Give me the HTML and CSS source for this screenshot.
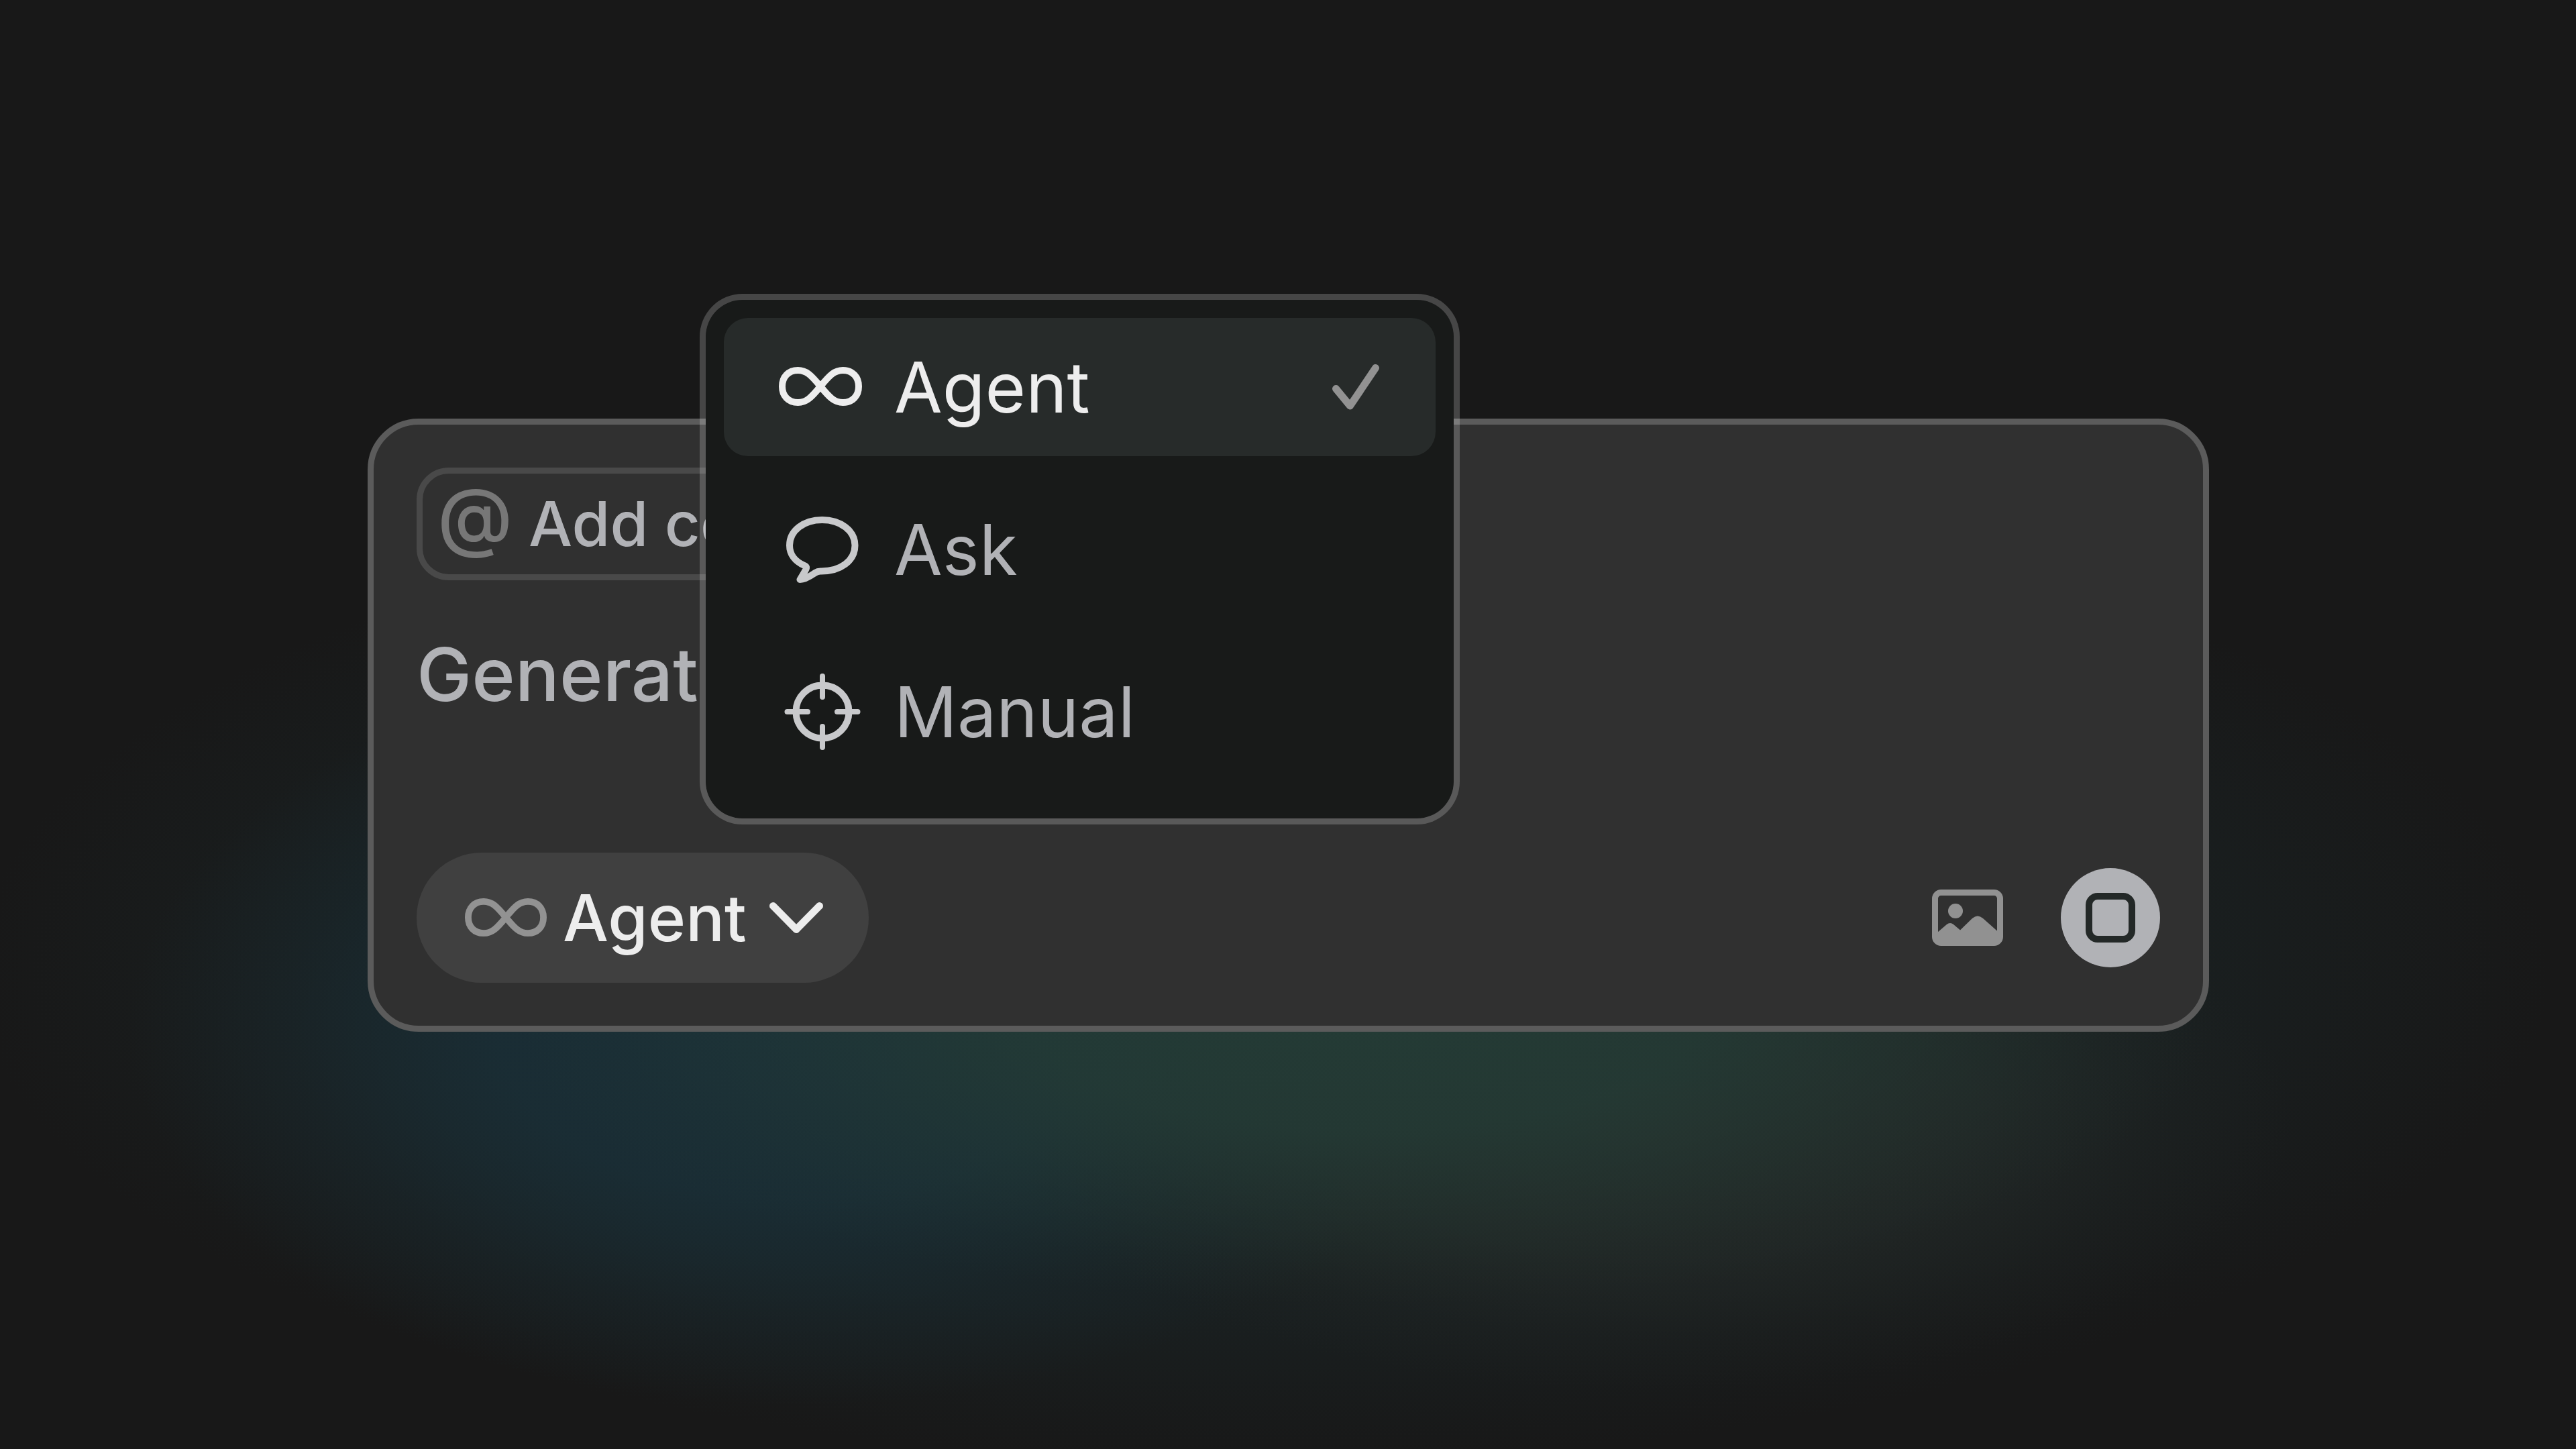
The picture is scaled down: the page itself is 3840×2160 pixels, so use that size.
FILE: index.html
```html
<!DOCTYPE html>
<html lang="en">
<head>
    <meta charset="UTF-8">
    <title>Agent</title>
    <link rel="stylesheet" href="styles.css">
</head>
<body>
    <main class="stage">
        <form class="composer">
            <button type="button" class="context-chip">
                <span class="at-sign">@</span>
                <span>Add context</span>
            </button>

            <textarea class="prompt" aria-label="Prompt">Generat</textarea>

            <div class="toolbar">
                <div class="mode-picker">
                    <button type="button" class="mode-btn" aria-haspopup="menu" aria-expanded="true">
                        <svg class="mode-icon" viewBox="0 0 124 58">
                            <path d="M62 29C48 12 41 5 28.500 5C14 5 5 15 5 29C5 43 14 53 28.500 53C41 53 48 46 62 29C76 12 83 5 95.500 5C110 5 119 15 119 29C119 43 110 53 95.500 53C83 53 76 46 62 29Z"/>
                        </svg>
                        <span>Agent</span>
                        <svg class="chevron" viewBox="0 0 80 46">
                            <path d="M5.500 5.500L40 40.500L74.500 5.500"/>
                        </svg>
                    </button>

                    <div class="menu" role="menu">
                        <button type="button" class="menu-item selected" role="menuitemradio" aria-checked="true">
                            <svg class="menu-icon" viewBox="0 0 126 114">
                                <path d="M60 56C46 39 39 32 26.500 32C12 32 3 42 3 56C3 70 12 80 26.500 80C39 80 46 73 60 56C74 39 81 32 93.500 32C108 32 117 42 117 56C117 70 108 80 93.500 80C81 80 74 73 60 56Z"/>
                            </svg>
                            <span>Agent</span>
                            <svg class="check" viewBox="0 0 70 68">
                                <path d="M5.500 36.500L26.500 62L64.500 5.500"/>
                            </svg>
                        </button>
                        <button type="button" class="menu-item" role="menuitemradio" aria-checked="false">
                            <svg class="menu-icon" viewBox="0 0 126 114">
                                <path d="M60 89.500C90 90 111.500 74 111.500 51C111.500 29 90 13 62.500 13C35 13 14 29 14 51C14 64 22 75 36 81C41 83 39 86 36 91L29.500 102C38 102 46 96 52 92C55 90 56 89.500 60 89.500Z"/>
                            </svg>
                            <span>Ask</span>
                        </button>
                        <button type="button" class="menu-item" role="menuitemradio" aria-checked="false">
                            <svg class="menu-icon" viewBox="0 0 126 114">
                                <circle cx="63" cy="57" r="39.500"/>
                                <path class="ticks" d="M63 4V35M63 79V110M10.500 57H41M85 57H115.500"/>
                            </svg>
                            <span>Manual</span>
                        </button>
                    </div>
                </div>

                <div class="actions">
                    <button type="button" class="image-btn" aria-label="Attach image">
                        <svg viewBox="0 0 106 84">
                            <rect x="4.500" y="4.500" width="97" height="75" rx="9"/>
                            <circle class="fill" cx="35" cy="32" r="11"/>
                            <path class="fill" d="M8 64L22 52Q27 48 32 52L42 60.500L60 43Q68 36 76 43L98 62.500V78H8Z"/>
                        </svg>
                    </button>
                    <button type="button" class="stop-btn" aria-label="Stop">
                        <svg viewBox="0 0 74 74">
                            <rect x="5" y="5" width="64" height="64" rx="13"/>
                        </svg>
                    </button>
                </div>
            </div>
        </form>
    </main>
</body>
</html>
```

FILE: styles.css
```css
* {
    box-sizing: border-box;
}
body {
    margin: 0;
    background-color: #181818;
    font-family: Inter, "Liberation Sans", sans-serif;
}
.stage {
    display: flex;
    align-items: center;
    min-height: 100vh;
    padding: 2px 547px 0 548px;
    /* coloured glow behind the composer */
    background-image:
        radial-gradient(ellipse 33% 20% at 53% 70%, rgba(36, 60, 54, 0.95), rgba(36, 60, 54, 0.8) 40%, rgba(36, 60, 54, 0.35) 70%, rgba(36, 60, 54, 0.1) 88%, rgba(36, 60, 54, 0) 100%),
        radial-gradient(ellipse 25% 19% at 64% 77%, rgba(40, 45, 42, 0.8), rgba(40, 45, 42, 0.5) 50%, rgba(40, 45, 42, 0.15) 80%, rgba(40, 45, 42, 0) 100%),
        radial-gradient(ellipse 26% 26% at 31% 71%, rgba(26, 48, 57, 0.95), rgba(26, 48, 57, 0.8) 45%, rgba(26, 48, 57, 0.3) 75%, rgba(26, 48, 57, 0) 100%),
        radial-gradient(ellipse 50% 34% at 49% 67%, rgba(26, 34, 35, 0.9), rgba(26, 34, 35, 0.7) 70%, rgba(26, 34, 35, 0.35) 85%, rgba(26, 34, 35, 0) 100%);
}
button {
    padding: 0;
    border: none;
    background: none;
    color: inherit;
    font: inherit;
    cursor: pointer;
}
svg {
    display: block;
    flex: none;
    overflow: visible;
    fill: none;
    stroke: currentColor;
    stroke-width: 10;
    stroke-linecap: round;
    stroke-linejoin: round;
}

.composer {
    flex: 1;
    display: flex;
    flex-direction: column;
    align-items: flex-start;
    gap: 64px;
    padding: 64px;
    border: 9px solid #5b5b5b;
    border-radius: 76px;
    background-color: #303030;
    color: #b1b2b6;
}
.context-chip {
    display: flex;
    align-items: center;
    gap: 24px;
    padding: 0 22px;
    border: 9px solid #494949;
    border-radius: 48px;
    font-size: 92px;
    font-weight: 500;
    line-height: 150px;
}
.at-sign {
    color: #777;
    font-size: 114px;
    font-feature-settings: "case";
}
.prompt {
    width: 100%;
    height: 278px;
    padding: 0;
    border: none;
    outline: none;
    resize: none;
    background: none;
    color: inherit;
    font-family: inherit;
    font-size: 110px;
    font-weight: 500;
    line-height: 152px;
}

.toolbar {
    display: flex;
    justify-content: space-between;
    align-items: center;
    width: 100%;
}
.mode-picker {
    position: relative;
}
.mode-btn {
    display: flex;
    align-items: center;
    gap: 24px;
    padding: 0 68px 0 72px;
    border-radius: 97px;
    background-color: #404040;
    color: #ededed;
    font-size: 96px;
    font-weight: 500;
    line-height: 194px;
}
.mode-icon {
    width: 122px;
    color: #929292;
}
.chevron {
    width: 80px;
    margin-left: 10px;
    stroke-width: 11;
}

.menu {
    position: absolute;
    left: 422px;
    bottom: calc(100% + 42px);
    display: flex;
    flex-direction: column;
    gap: 36px;
    width: 1133px;
    padding: 27px 27px 56px;
    border: 9px solid rgba(255, 255, 255, 0.2);
    border-radius: 64px;
    background-color: #181a19;
    background-clip: padding-box;
}
.menu-item {
    display: flex;
    align-items: center;
    gap: 44px;
    padding: 0 84px;
    border-radius: 36px;
    font-size: 104px;
    line-height: 206px;
}
.menu-item.selected {
    background-color: #272b2a;
    color: #ededed;
}
.menu-icon {
    width: 126px;
}
.menu-item:not(.selected) .menu-icon {
    color: #c8c9cb;
}
.ticks {
    stroke-width: 8;
}
.check {
    width: 70px;
    margin-left: auto;
    color: #929292;
    stroke-width: 11;
}

.actions {
    display: flex;
    align-items: center;
    gap: 86px;
}
.image-btn {
    color: #919191;
}
.image-btn svg {
    width: 106px;
    stroke-width: 9;
}
.fill {
    fill: currentColor;
    stroke: none;
}
.stop-btn {
    display: flex;
    justify-content: center;
    align-items: center;
    width: 148px;
    height: 148px;
    border-radius: 50%;
    background-color: #b1b2b6;
    color: #232827;
}
.stop-btn svg {
    width: 74px;
}
```
